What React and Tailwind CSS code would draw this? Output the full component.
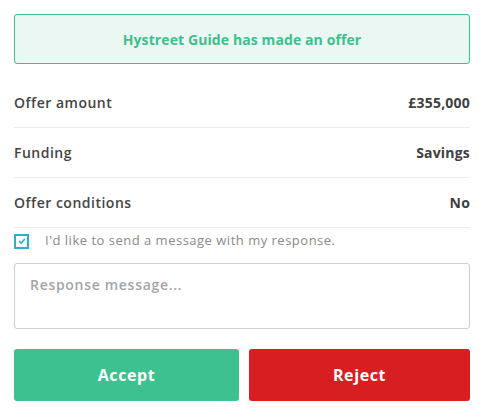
import React, { useState } from "react";

function Row({ label, value }) {
  return (
    <div className="flex h-[50px] items-center justify-between border-b border-[#ececec] text-[14px]">
      <span className="font-semibold tracking-[0.5px] text-[#444]">{label}</span>
      <span className="font-bold tracking-[0.2px] text-[#404040]">{value}</span>
    </div>
  );
}

export default function App() {
  const [sendMessage, setSendMessage] = useState(true);

  return (
    <div
      className="min-h-screen bg-white pl-[14px] pr-[16px] pt-[14px]"
      style={{ fontFamily: '"Open Sans", "Liberation Sans", sans-serif' }}
    >
      <div className="flex h-[50px] items-center justify-center rounded-[3px] border border-[#3ebf8e] bg-[#ebf7f3]">
        <span className="text-[14px] font-bold tracking-[0.1px] text-[#3ebf8e]">Hystreet Guide has made an offer</span>
      </div>

      <div className="mt-[14px]">
        <Row label="Offer amount" value="£355,000" />
        <Row label="Funding" value="Savings" />
        <Row label="Offer conditions" value="No" />
      </div>

      <label className="flex h-[26px] items-center gap-[16px]">
        <button
          type="button"
          onClick={() => setSendMessage(!sendMessage)}
          className="flex h-[15px] w-[15px] shrink-0 items-center justify-center border-2 border-[#27b3c5] bg-white"
        >
          {sendMessage && (
            <svg viewBox="0 0 10 10" className="h-[8px] w-[8px]">
              <path d="M1.5 5.2 L4 7.5 L8.5 2.5" fill="none" stroke="#27b3c5" strokeWidth="2" />
            </svg>
          )}
        </button>
        <span className="text-[13px] tracking-[0.5px] text-[#8a8a8a]">I'd like to send a message with my response.</span>
      </label>

      <textarea
        placeholder="Response message..."
        className="mt-[9px] block h-[66px] w-full resize-none rounded-[3px] border border-[#cfcfcf] px-[15px] py-[10px] text-[14px] font-semibold tracking-[0.7px] text-[#444] placeholder:text-[#a5a5a5] focus:outline-none"
      />

      <div className="mt-[20px] grid grid-cols-[225px_1fr] gap-[10px]">
        <button className="h-[52px] rounded-[3px] bg-[#3ec190] text-[16px] font-bold tracking-[0.6px] text-white">Accept</button>
        <button className="h-[52px] rounded-[3px] bg-[#d71f22] text-[16px] font-bold tracking-[0.6px] text-white">Reject</button>
      </div>
    </div>
  );
}
